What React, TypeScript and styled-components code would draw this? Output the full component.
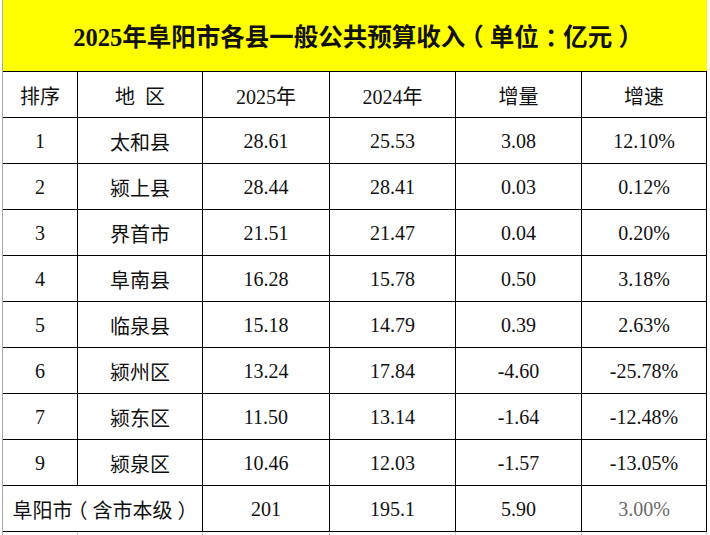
import React from "react";
import styled, { createGlobalStyle } from "styled-components";

const GlobalStyle = createGlobalStyle`
  html, body {
    margin: 0;
    padding: 0;
    background: #ffffff;
  }
`;

const Sheet = styled.div`
  width: 705px;
  height: 535px;
  margin-left: 2px;
  border-left: 1px solid #a8a8a8;
  overflow: hidden;
`;

const Title = styled.div`
  height: 71px;
  width: 704px;
  background: #ffff00;
  border-bottom: 1px solid #000;
  display: flex;
  align-items: center;
  justify-content: center;
  font-family: "Liberation Serif", "Noto Sans CJK SC", serif;
  font-weight: 700;
  font-size: 24.5px;
  color: #111;
`;

// full-width bracket / colon: glyph centred in a whole em
const Punct = styled.span`
  display: inline-block;
  width: 1em;
  text-align: center;
  font-feature-settings: "halt";
`;

const Grid = styled.div`
  display: grid;
  grid-template-columns: 75px 125px 127px 126px 126px 125px;
  grid-auto-rows: 46px;
  width: 704px;
`;

const Cell = styled.div<{ $cjk?: boolean; $span?: number; $marked?: boolean; $faint?: boolean }>`
  box-sizing: border-box;
  border-right: 1px solid #000;
  border-bottom: 1px solid #000;
  display: flex;
  align-items: center;
  justify-content: center;
  padding-top: 2px;
  font-family: ${(p) =>
    p.$cjk
      ? `"Noto Sans CJK SC", sans-serif`
      : `"Liberation Serif", "Noto Sans CJK SC", serif`};
  font-weight: 400;
  font-size: 20px;
  color: ${(p) => (p.$faint ? "#6a6a6a" : "#111")};
  white-space: nowrap;
  grid-column: ${(p) => (p.$span ? `span ${p.$span}` : "auto")};
  box-shadow: ${(p) => (p.$marked ? "-1px 0 0 #6cc06c" : "none")};
`;

const GhostRow = styled.div`
  display: grid;
  grid-template-columns: 75px 125px 127px 126px 126px 125px;
  height: 4px;
  width: 704px;
`;

const GhostCell = styled.div`
  box-sizing: border-box;
  border-right: 1px solid #d0d0d0;
`;

type Row = {
  rank: string;
  area: string;
  y2025: string;
  y2024: string;
  delta: string;
  rate: string;
};

const rows: Row[] = [
  { rank: "1", area: "太和县", y2025: "28.61", y2024: "25.53", delta: "3.08", rate: "12.10%" },
  { rank: "2", area: "颍上县", y2025: "28.44", y2024: "28.41", delta: "0.03", rate: "0.12%" },
  { rank: "3", area: "界首市", y2025: "21.51", y2024: "21.47", delta: "0.04", rate: "0.20%" },
  { rank: "4", area: "阜南县", y2025: "16.28", y2024: "15.78", delta: "0.50", rate: "3.18%" },
  { rank: "5", area: "临泉县", y2025: "15.18", y2024: "14.79", delta: "0.39", rate: "2.63%" },
  { rank: "6", area: "颍州区", y2025: "13.24", y2024: "17.84", delta: "-4.60", rate: "-25.78%" },
  { rank: "7", area: "颍东区", y2025: "11.50", y2024: "13.14", delta: "-1.64", rate: "-12.48%" },
  { rank: "9", area: "颍泉区", y2025: "10.46", y2024: "12.03", delta: "-1.57", rate: "-13.05%" },
];

export default function App() {
  return (
    <>
      <GlobalStyle />
      <Sheet>
        <Title>
          2025年阜阳市各县一般公共预算收入<Punct>（</Punct>单位<Punct>：</Punct>亿元<Punct>）</Punct>
        </Title>
        <Grid>
          <Cell $cjk>排序</Cell>
          <Cell $cjk>地&ensp;区</Cell>
          <Cell>2025年</Cell>
          <Cell>2024年</Cell>
          <Cell $cjk>增量</Cell>
          <Cell $cjk>增速</Cell>

          {rows.map((r) => (
            <React.Fragment key={r.rank}>
              <Cell $marked={r.rank === "4"}>{r.rank}</Cell>
              <Cell $cjk>{r.area}</Cell>
              <Cell>{r.y2025}</Cell>
              <Cell>{r.y2024}</Cell>
              <Cell>{r.delta}</Cell>
              <Cell>{r.rate}</Cell>
            </React.Fragment>
          ))}

          <Cell $cjk $span={2}>
            阜阳市<Punct>（</Punct>含市本级<Punct>）</Punct>
          </Cell>
          <Cell>201</Cell>
          <Cell>195.1</Cell>
          <Cell>5.90</Cell>
          <Cell $faint>3.00%</Cell>
        </Grid>
        <GhostRow>
          {Array.from({ length: 6 }).map((_, i) => (
            <GhostCell key={i} />
          ))}
        </GhostRow>
      </Sheet>
    </>
  );
}
